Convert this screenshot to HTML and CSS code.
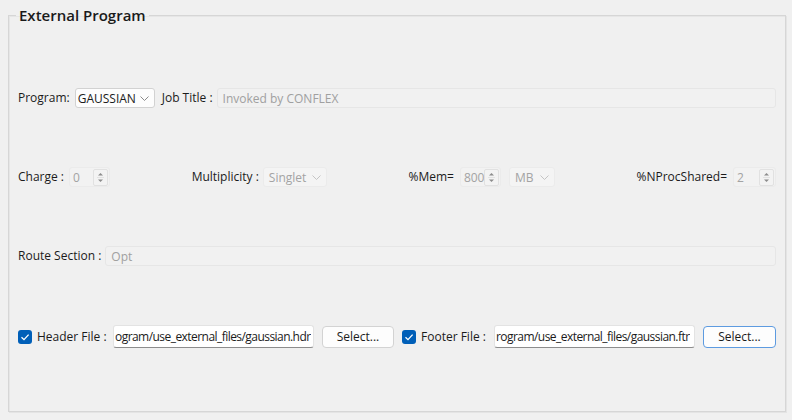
FILE: index.html
```html
<!DOCTYPE html>
<html>
<head>
<meta charset="utf-8">
<link rel="stylesheet" href="styles.css">
</head>
<body>
<fieldset class="group">
  <legend class="group-title">External Program</legend>

  <div class="row row-program">
    <span class="label lbl-program">Program:</span>
    <div class="combo combo-program">
      <span class="combo-text">GAUSSIAN</span>
      <svg class="chev" width="9" height="5" viewBox="0 0 9 5"><polyline points="0.5,0.5 4.5,4.5 8.5,0.5" fill="none" stroke="#8a8a8a" stroke-width="1"/></svg>
    </div>
    <span class="label lbl-job">Job Title :</span>
    <div class="field field-disabled grow"><span class="ph">Invoked by CONFLEX</span></div>
  </div>

  <div class="row row-params">
    <div class="pgroup">
      <span class="label">Charge :</span>
      <div class="spin spin-charge">
        <span class="spin-text">0</span>
        <span class="spin-btns">
          <svg width="13" height="15" viewBox="0 0 13 15"><polygon points="4,5.5 6.5,3 9,5.5" fill="#8c8c8c"/><line x1="3" y1="7.5" x2="10" y2="7.5" stroke="#e2e2e2"/><polygon points="4,9.5 6.5,12 9,9.5" fill="#8c8c8c"/></svg>
        </span>
      </div>
    </div>
    <div class="pgroup">
      <span class="label">Multiplicity :</span>
      <div class="combo combo-disabled combo-mult">
        <span class="combo-text">Singlet</span>
        <svg class="chev" width="9" height="5" viewBox="0 0 9 5"><polyline points="0.5,0.5 4.5,4.5 8.5,0.5" fill="none" stroke="#c4c4c4" stroke-width="1"/></svg>
      </div>
    </div>
    <div class="pgroup">
      <span class="label">%Mem=</span>
      <div class="spin spin-mem">
        <span class="spin-text">800</span>
        <span class="spin-btns">
          <svg width="13" height="15" viewBox="0 0 13 15"><polygon points="4,5.5 6.5,3 9,5.5" fill="#8c8c8c"/><line x1="3" y1="7.5" x2="10" y2="7.5" stroke="#e2e2e2"/><polygon points="4,9.5 6.5,12 9,9.5" fill="#8c8c8c"/></svg>
        </span>
      </div>
      <div class="combo combo-disabled combo-mb">
        <span class="combo-text">MB</span>
        <svg class="chev" width="9" height="5" viewBox="0 0 9 5"><polyline points="0.5,0.5 4.5,4.5 8.5,0.5" fill="none" stroke="#c4c4c4" stroke-width="1"/></svg>
      </div>
    </div>
    <div class="pgroup">
      <span class="label">%NProcShared=</span>
      <div class="spin spin-nproc">
        <span class="spin-text">2</span>
        <span class="spin-btns">
          <svg width="13" height="15" viewBox="0 0 13 15"><polygon points="4,5.5 6.5,3 9,5.5" fill="#8c8c8c"/><line x1="3" y1="7.5" x2="10" y2="7.5" stroke="#e2e2e2"/><polygon points="4,9.5 6.5,12 9,9.5" fill="#8c8c8c"/></svg>
        </span>
      </div>
    </div>
  </div>

  <div class="row row-route">
    <span class="label lbl-route">Route Section :</span>
    <div class="field field-disabled grow"><span class="ph">Opt</span></div>
  </div>

  <div class="row row-files">
    <span class="check">
      <svg width="14" height="14" viewBox="0 0 14 14"><rect x="0" y="0" width="14" height="14" rx="3" fill="#005fb8"/><polyline points="3.5,7.2 6,9.6 10.6,4.6" fill="none" stroke="#ffffff" stroke-width="1.3"/></svg>
    </span>
    <span class="label lbl-header">Header File :</span>
    <div class="field field-edit grow"><span class="path">ogram/use_external_files/gaussian.hdr</span></div>
    <button class="btn btn-header">Select...</button>
    <span class="check check-footer">
      <svg width="14" height="14" viewBox="0 0 14 14"><rect x="0" y="0" width="14" height="14" rx="3" fill="#005fb8"/><polyline points="3.5,7.2 6,9.6 10.6,4.6" fill="none" stroke="#ffffff" stroke-width="1.3"/></svg>
    </span>
    <span class="label lbl-footer">Footer File :</span>
    <div class="field field-edit grow"><span class="path">rogram/use_external_files/gaussian.ftr</span></div>
    <button class="btn btn-footer">Select...</button>
  </div>
</fieldset>
</body>
</html>
```

FILE: styles.css
```css
html, body {
  margin: 0;
  padding: 0;
  background: #f0f0f0;
}
body {
  width: 792px;
  height: 420px;
  overflow: hidden;
  font-family: "Open Sans", "Noto Sans", sans-serif;
  font-size: 12px;
  color: #1b1b1b;
}
.group {
  box-sizing: border-box;
  margin: 7px 0 0 8px;
  width: 778px;
  min-width: 0;
  height: 405px;
  border: 1px solid #d6d6d6;
  box-shadow: inset 1px 1px 0 #e6e6e6, 1px 1px 0 #e4e4e4;
  padding: 65px 9px 0 9px;
  display: flex;
  flex-direction: column;
  gap: 59px;
}
.group-title {
  font-size: 15px;
  line-height: 16px;
  font-weight: 600;
  color: #1a1a1a;
  padding: 0 3px;
  margin-left: -2px;
}
.row {
  display: flex;
  align-items: center;
  height: 20px;
  min-width: 0;
}
.row-files {
  height: 23px;
}
.label {
  white-space: nowrap;
  line-height: 16px;
}
.grow {
  flex: 1 1 0;
  min-width: 0;
}
.lbl-program { margin-right: 5px; }
.combo {
  box-sizing: border-box;
  height: 20px;
  display: flex;
  align-items: center;
  justify-content: space-between;
  padding: 0 5px 0 5px;
  border-radius: 3px;
}
.combo-program {
  width: 80px;
  background: #fdfdfd;
  border: 1px solid #d2d2d2;
  color: #1b1b1b;
  margin-right: 7px;
  padding-left: 2px;
}
.combo-disabled {
  background: #f4f4f4;
  border: 1px solid #ebebeb;
  color: #a3a3a3;
}
.combo-mult { width: 64px; margin-left: 4px; }
.combo-mb { width: 46px; margin-left: 8px; }
.lbl-job { margin-right: 4px; }
.field {
  box-sizing: border-box;
  height: 20px;
  display: flex;
  align-items: center;
  padding: 0 5px;
  overflow: hidden;
  white-space: nowrap;
}
.field-disabled {
  background: #f1f1f1;
  border: 1px solid #e6e6e6;
  border-radius: 3px;
}
.ph { color: #a0a0a0; }
.row-params { justify-content: space-between; }
.pgroup {
  display: flex;
  align-items: center;
}
.spin {
  box-sizing: border-box;
  height: 20px;
  display: flex;
  align-items: center;
  justify-content: space-between;
  background: #f2f2f2;
  border: 1px solid #ebebeb;
  border-radius: 3px;
  padding: 0 1px 0 3px;
  margin-left: 5px;
  color: #a3a3a3;
}
.spin-charge { width: 41px; }
.spin-mem { width: 41px; margin-left: 6px; }
.spin-nproc { width: 43px; margin-left: 6px; }
.spin-btns {
  display: flex;
  box-sizing: border-box;
  width: 15px;
  height: 17px;
  align-items: center;
  justify-content: center;
  border: 1px solid #e1e1e1;
  border-radius: 2px;
  background: #f3f3f3;
}
.spin-btns svg { display: block; }
.chev { display: block; flex: none; }
.lbl-route { margin-right: 4px; }
.check {
  width: 14px;
  height: 14px;
  flex: none;
  margin-right: 5px;
}
.check svg { display: block; }
.check-footer { margin-left: 8px; }
.lbl-header { width: 76px; flex: none; }
.lbl-footer { width: 73px; flex: none; }
.field-edit {
  height: 23px;
  background: #ffffff;
  border: 1px solid #e3e3e3;
  border-bottom: 1px solid #8c8c8c;
  border-radius: 3px;
  padding: 0 0 0 1px;
  color: #1b1b1b;
}
.path {
  min-width: 0;
  overflow: hidden;
  letter-spacing: -0.55px;
}
.btn {
  box-sizing: border-box;
  height: 22px;
  flex: none;
  margin-left: 8px;
  font-family: "Open Sans", "Noto Sans", sans-serif;
  font-size: 12px;
  color: #1b1b1b;
  background: #fdfdfd;
  border: 1px solid #d3d3d3;
  border-radius: 4px;
  padding: 0;
}
.btn-header { width: 72px; }
.btn-footer { width: 73px; border-color: #5d9be0; }
```
